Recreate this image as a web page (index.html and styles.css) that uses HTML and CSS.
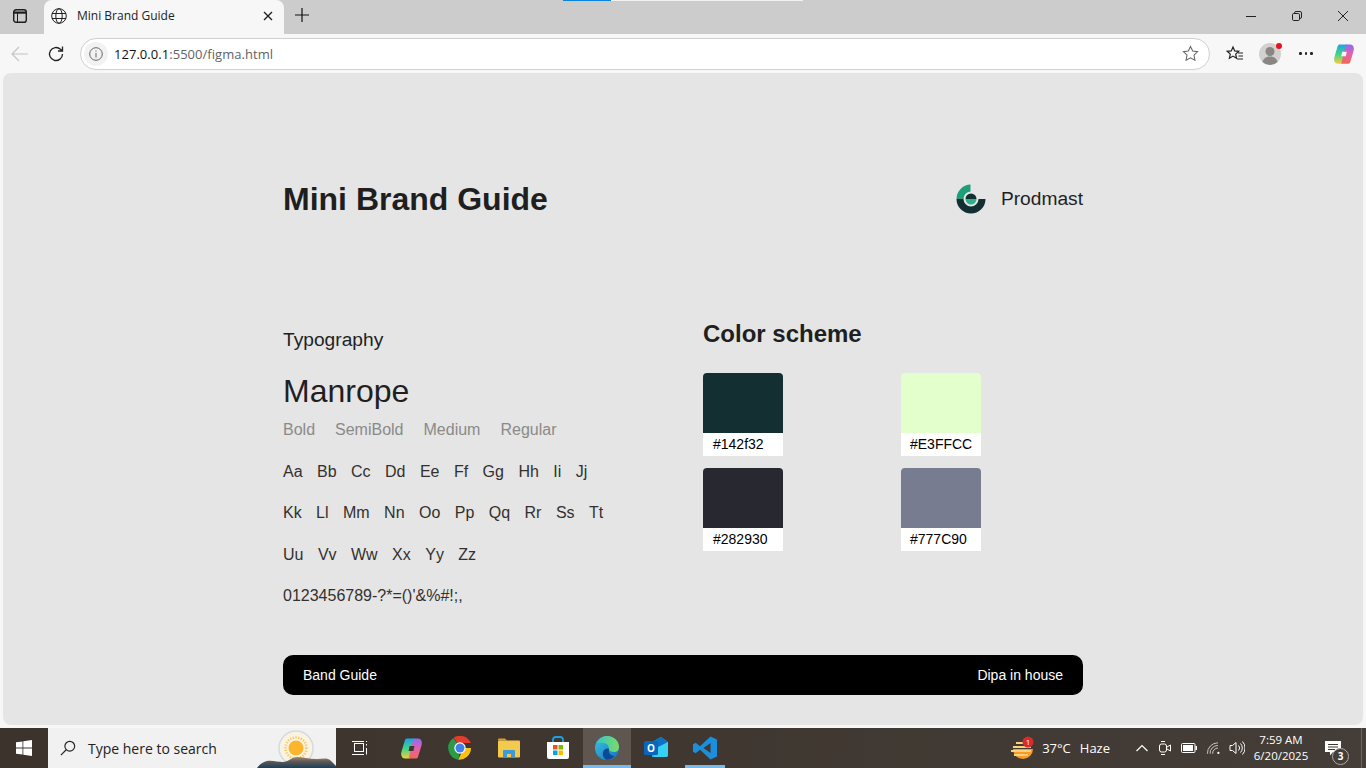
FILE: index.html
```html
<!DOCTYPE html>
<html lang="en">

<head>
    <meta charset="UTF-8">
    <meta name="viewport" content="width=device-width, initial-scale=1.0">
    <title>Mini Brand Guide</title>
    <link rel="stylesheet" href="styles.css">
</head>

<body>
    <div class="window">
        <!-- browser tabs -->
        <div class="tabbar">
            <span class="tab-side">
                <svg width="14" height="14" viewBox="0 0 14 14" fill="none" stroke="#1c1c1c" stroke-width="1.4"><rect x=".7" y=".7" width="12.6" height="12.6" rx="2.4"/><path d="M1 3.600h12" stroke-width="2.200"/><path d="M4.500 4v9.500" stroke-width="1"/></svg>
            </span>
            <div class="tab">
                <svg width="16" height="16" viewBox="0 0 16 16" fill="none" stroke="#222" stroke-width="1"><circle cx="8" cy="8" r="7.300"/><ellipse cx="8" cy="8" rx="3.200" ry="7.300"/><path d="M1 5.500h14M1 10.500h14"/></svg>
                <span class="tab-title">Mini Brand Guide</span>
                <svg class="tab-close" width="10" height="10" viewBox="0 0 10 10" stroke="#222" stroke-width="1.400"><path d="M1 1l8 8M9 1l-8 8"/></svg>
            </div>
            <svg class="tab-new" width="14" height="14" viewBox="0 0 14 14" stroke="#111" stroke-width="1.200"><path d="M7 0v14M0 7h14"/></svg>
            <div class="strip"><span class="strip-blue"></span><span class="strip-light"></span></div>
            <div class="win-btns">
                <svg width="10" height="10" viewBox="0 0 10 10" stroke="#222"><path d="M0 5.500h10"/></svg>
                <svg width="10" height="10" viewBox="0 0 10 10" fill="none" stroke="#222"><rect x=".5" y="2.500" width="7" height="7" rx="1.200"/><path d="M2.500 2.500v-.5a1.500 1.500 0 0 1 1.500-1.500h4a1.500 1.500 0 0 1 1.500 1.500v4a1.500 1.500 0 0 1-1.500 1.500h-.5"/></svg>
                <svg width="10" height="10" viewBox="0 0 10 10" stroke="#222"><path d="M0 0l10 10M10 0l-10 10"/></svg>
            </div>
        </div>

        <!-- address bar -->
        <div class="toolbar">
            <svg class="nav-back" width="18" height="16" viewBox="0 0 18 16" fill="none" stroke="#c4c4c4" stroke-width="1.200"><path d="M17 8H1M8 1L1 8l7 7"/></svg>
            <svg class="nav-reload" width="18" height="18" viewBox="0 0 18 18" fill="none" stroke="#222" stroke-width="1.300"><path d="M15.500 9a6.500 6.500 0 1 1-2-4.700L15.500 6M15.500 1.500V6H11"/></svg>
            <div class="address">
                <span class="info"><svg width="14" height="14" viewBox="0 0 14 14" fill="none" stroke="#666"><circle cx="7" cy="7" r="6.300"/><path d="M7 6v4.500M7 3.500v1.200"/></svg></span>
                <span class="url">127.0.0.1<span class="url-rest">:5500/figma.html</span></span>
                <svg class="addr-star" width="17" height="17" viewBox="0 0 18 18" fill="none" stroke="#666" stroke-width="1.100"><path d="M9 1.500l2.300 4.900 5.200.7-3.800 3.700 1 5.300L9 13.500l-4.700 2.600 1-5.300L1.500 7.100l5.200-.7z"/></svg>
            </div>
            <svg class="fav" width="18" height="18" viewBox="0 0 18 18" fill="none" stroke="#222" stroke-width="1.200"><path d="M7 2l1.700 3.900 4 .4-3 2.800.9 4.200L7 11.100l-3.600 2.200.9-4.200-3-2.800 4-.4zM12 8h5M12.500 11H17M11 14h6"/></svg>
            <span class="avatar">
                <svg width="22" height="22" viewBox="0 0 22 22"><circle cx="11" cy="11" r="11" fill="#d3d1cf"/><circle cx="11" cy="8.500" r="4.500" fill="#8a8683"/><path d="M3.500 19c1-4 4-5.500 7.500-5.500s6.500 1.500 7.500 5.500a11 11 0 0 1-15 0z" fill="#8a8683"/></svg>
                <i class="avatar-dot"></i>
            </span>
            <span class="dots"><i></i><i></i><i></i></span>
            <svg class="copilot" width="22" height="22" viewBox="0 0 24 24"><defs><linearGradient id="cpa" x1="0" y1="0" x2="0" y2="1"><stop offset="0" stop-color="#1fa2e8"/><stop offset=".5" stop-color="#3fd48a"/><stop offset="1" stop-color="#f5cf3a"/></linearGradient><linearGradient id="cpb" x1="0" y1="0" x2="0" y2="1"><stop offset="0" stop-color="#f26a4f"/><stop offset=".5" stop-color="#e45fb0"/><stop offset="1" stop-color="#8d6cf0"/></linearGradient></defs><path d="M7 1.500h8L10 22.500H5C2 22.500.5 19 1.500 15.500l3-10C5 3.500 5.500 1.500 7 1.500z" fill="url(#cpa)"/><path d="M7 1.500h8L10 22.500H5C2 22.500.5 19 1.500 15.500l3-10C5 3.500 5.500 1.500 7 1.500z" fill="url(#cpb)" transform="rotate(180 12 12)"/><path d="M10 9.500h5l-1 5H9z" fill="#f7f7f7"/></svg>
        </div>

        <!-- the page itself -->
        <main class="viewport">
            <div class="guide">
                <header class="guide-head">
                    <h1>Mini Brand Guide</h1>
                    <div class="brand">
                        <svg width="30" height="30" viewBox="0 0 30 30"><path d="M14.500 0.500A14.500 14.500 0 0 0 0.500 15H7.500A7.500 7.500 0 0 1 14.500 7.500z" fill="#1f9d78"/><path d="M0.500 15A14.500 14.500 0 0 0 29.500 15H22.500A7.500 7.500 0 0 1 7.500 15z" fill="#142f32"/><path d="M9.500 15a5.500 5.500 0 0 1 11 0z" fill="#142f32"/><path d="M9.500 15a5.500 5.500 0 0 0 11 0z" fill="#2fb08a"/></svg>
                        <span>Prodmast</span>
                    </div>
                </header>

                <div class="columns">
                    <section class="typo">
                        <h3>Typography</h3>
                        <p class="font-name">Manrope</p>
                        <div class="weights"><span>Bold</span><span>SemiBold</span><span>Medium</span><span>Regular</span></div>
                        <div class="letters"><span>Aa</span><span>Bb</span><span>Cc</span><span>Dd</span><span>Ee</span><span>Ff</span><span>Gg</span><span>Hh</span><span>Ii</span><span>Jj</span></div>
                        <div class="letters"><span>Kk</span><span>Ll</span><span>Mm</span><span>Nn</span><span>Oo</span><span>Pp</span><span>Qq</span><span>Rr</span><span>Ss</span><span>Tt</span></div>
                        <div class="letters"><span>Uu</span><span>Vv</span><span>Ww</span><span>Xx</span><span>Yy</span><span>Zz</span></div>
                        <div class="letters"><span>0123456789-?*=()'&amp;%#!;,</span></div>
                    </section>

                    <section class="colors">
                        <h2>Color scheme</h2>
                        <div class="swatches">
                            <div class="swatch"><div class="chip c-teal"></div><p class="code">#142f32</p></div>
                            <div class="swatch"><div class="chip c-lime"></div><p class="code">#E3FFCC</p></div>
                            <div class="swatch"><div class="chip c-dark"></div><p class="code">#282930</p></div>
                            <div class="swatch"><div class="chip c-gray"></div><p class="code">#777C90</p></div>
                        </div>
                    </section>
                </div>

                <footer class="guide-foot">
                    <span>Band Guide</span>
                    <span>Dipa in house</span>
                </footer>
            </div>
        </main>

        <!-- windows taskbar -->
        <div class="taskbar">
            <span class="start">
                <svg width="16" height="16" viewBox="0 0 16 16" fill="#fff"><path d="M0 2.300l6.500-.9v6.200H0zM7.300 1.300L16 0v7.600H7.300zM0 8.400h6.500v6.200L0 13.700zM7.300 8.400H16V16l-8.700-1.300z"/></svg>
            </span>
            <div class="search">
                <svg width="16" height="16" viewBox="0 0 18 18" fill="none" stroke="#222" stroke-width="1.300"><circle cx="11" cy="7" r="5.500"/><path d="M7 11l-6 6"/></svg>
                <span class="search-text">Type here to search</span>
                <svg class="search-art" width="80" height="39" viewBox="0 0 80 39"><defs><linearGradient id="hill" x1="0" y1="0" x2="0" y2="1"><stop offset="0" stop-color="#a98a6c"/><stop offset=".4" stop-color="#5d5a58"/><stop offset="1" stop-color="#1c3d57"/></linearGradient></defs><circle cx="40" cy="19" r="17" fill="#fbf3e2" stroke="#cfdce0" stroke-width="1.500"/><circle cx="40" cy="19" r="7.500" fill="#fbb62e"/><circle cx="40" cy="19" r="10.500" fill="none" stroke="#f7c65a" stroke-width="2.500" stroke-dasharray="1.200 1.500"/><path d="M1 39C4 35 7 33 11 32c5-1 11 1 16 1 5 0 9-5 14-5 6 0 12 2 20 2 4 0 8-1 11 0 3 1 5 4 8 7v2z" fill="url(#hill)"/></svg>
            </div>
            <div class="task-icons">
                <span class="task-icon">
                    <svg width="16" height="16" viewBox="0 0 16 16" fill="none" stroke="#fff"><rect x="2.500" y="3.500" width="9" height="8"/><path d="M0 1.500h12M0 14.500h12M14.500 1v1M14.500 4v1.500M14.500 8v6.500"/></svg>
                </span>
                <span class="task-icon">
                    <svg width="23" height="23" viewBox="0 0 24 24"><defs><linearGradient id="cqa" x1="0" y1="0" x2="0" y2="1"><stop offset="0" stop-color="#1fa2e8"/><stop offset=".5" stop-color="#3fd48a"/><stop offset="1" stop-color="#f5cf3a"/></linearGradient><linearGradient id="cqb" x1="0" y1="0" x2="0" y2="1"><stop offset="0" stop-color="#f26a4f"/><stop offset=".5" stop-color="#e45fb0"/><stop offset="1" stop-color="#8d6cf0"/></linearGradient></defs><path d="M7 1.500h8L10 22.500H5C2 22.500.5 19 1.500 15.500l3-10C5 3.500 5.500 1.500 7 1.500z" fill="url(#cqa)"/><path d="M7 1.500h8L10 22.500H5C2 22.500.5 19 1.500 15.500l3-10C5 3.500 5.500 1.500 7 1.500z" fill="url(#cqb)" transform="rotate(180 12 12)"/><path d="M10 9.500h5l-1 5H9z" fill="#3f3730"/></svg>
                </span>
                <span class="task-icon">
                    <svg width="24" height="24" viewBox="0 0 24 24"><path d="M12 12L5.800 1.500A12 12 0 0 1 23 7H12z" fill="#e33b2e"/><path d="M12 12H23A12 12 0 0 1 10 23.800L15 14z" fill="#fbc116"/><path d="M12 12l-1.500 11.800A12 12 0 0 1 5.500 2z" fill="#2c9a47"/><circle cx="12" cy="12" r="5.700" fill="#fff"/><circle cx="12" cy="12" r="4.500" fill="#3f80ec"/></svg>
                </span>
                <span class="task-icon">
                    <svg width="22" height="20" viewBox="0 0 22 20"><path d="M0 1.500A1 1 0 0 1 1 .5h6l2 2h-9z" fill="#d9a21f"/><rect y="2.500" width="22" height="17" rx="1" fill="#f3c94e"/><path d="M5 19.500v-6.500a1 1 0 0 1 1-1h10a1 1 0 0 1 1 1v6.500h-4v-3.500h-4v3.500z" fill="#3b9ad9"/></svg>
                </span>
                <span class="task-icon">
                    <svg width="24" height="24" viewBox="0 0 24 24"><path d="M7 6V4a3 3 0 0 1 3-3h4a3 3 0 0 1 3 3v2" fill="none" stroke="#1ba1e2" stroke-width="1.800"/><path d="M1 6h22v15a2 2 0 0 1-2 2H3a2 2 0 0 1-2-2z" fill="#fdfdfd"/><path d="M7 9h4.500v4.500H7z" fill="#f25022"/><path d="M12.500 9H17v4.500h-4.500z" fill="#7fba00"/><path d="M7 14.500h4.500V19H7z" fill="#00a4ef"/><path d="M12.500 14.500H17V19h-4.500z" fill="#ffb900"/></svg>
                </span>
                <span class="task-icon is-active">
                    <svg width="24" height="24" viewBox="0 0 24 24"><defs><linearGradient id="ega" x1="0" y1="0" x2="1" y2="1"><stop offset="0" stop-color="#36c5e0"/><stop offset="1" stop-color="#1a6fc4"/></linearGradient><linearGradient id="egb" x1="0" y1="0" x2="1" y2="0"><stop offset="0" stop-color="#38c4c8"/><stop offset="1" stop-color="#7bdc64"/></linearGradient></defs><circle cx="12" cy="12" r="12" fill="url(#ega)"/><path d="M2 7C4 2.500 8 0 12 0c7 0 12 5 12 11 0 3-2 5-5 5-3 0-5-1-5-3 0-4-3-6-6-6-2.500 0-5 .5-6 0z" fill="url(#egb)"/><path d="M14 13c-1 4 2 7 5.500 7-2 2.500-5 4-8 3.800C8 22 7 18 8.500 15c1-2 3.500-3 5.500-2z" fill="#0b4a96"/></svg>
                </span>
                <span class="task-icon">
                    <svg width="24" height="24" viewBox="0 0 24 24"><path d="M8 6l9-5 7 5v13a2 2 0 0 1-2 2H8z" fill="#1fb6e8"/><path d="M8 6l9-5 7 5-8 6z" fill="#0d72c4"/><path d="M10 13l14-7v13a2 2 0 0 1-2 2H10z" fill="#35d0f2"/><rect y="5" width="14" height="14" rx="1.500" fill="#0a66bd"/><text x="7" y="16" text-anchor="middle" class="outlook-o">O</text></svg>
                </span>
                <span class="task-icon is-open">
                    <svg width="24" height="24" viewBox="0 0 24 24"><path d="M17.500 0.500L24 3.500v17l-6.500 3L7 13.800l-4.300 3.400L0 15.700V8.300l2.700-1.500L7 10.200z" fill="#1b8fdc"/><path d="M17.500 7L10.500 12l7 5z" fill="#3f3730"/></svg>
                </span>
            </div>
            <div class="tray">
                <svg width="24" height="24" viewBox="0 0 24 24"><path d="M3 13h20a10 10 0 0 1-20 0z" fill="#f79a28"/><path d="M6 7h11M3 11h18M1 15h20M4 19h14" stroke="#fbd27a" stroke-width="2.200"/><circle cx="18" cy="6" r="5.500" fill="#d92b2b"/><text x="18" y="9" text-anchor="middle" class="badge-num">1</text></svg>
                <span class="temp">37°C</span>
                <span class="haze">Haze</span>
                <svg class="tray-chev" width="12" height="8" viewBox="0 0 12 8" fill="none" stroke="#fff" stroke-width="1.200"><path d="M.5 7L6 1.500 11.500 7"/></svg>
                <svg class="tray-cam" width="12" height="16" viewBox="0 0 12 16" fill="none" stroke="#fff"><rect x=".5" y="4" width="7" height="8" rx="2"/><path d="M8 7l3.500-2v6L8 9M2 1.500h4M2 14.500h4"/></svg>
                <svg class="tray-batt" width="16" height="10" viewBox="0 0 16 10"><rect x=".5" y=".5" width="13.500" height="9" rx="1" fill="none" stroke="#fff"/><rect x="2" y="2" width="10" height="6" fill="#fff"/><rect x="14.500" y="3" width="1.500" height="4" fill="#fff"/></svg>
                <svg class="tray-wifi" width="14" height="13" viewBox="0 0 16 14" fill="none" stroke="#fff"><path d="M.5 13a12 12 0 0 1 12-12.500M3.500 13a9 9 0 0 1 9-9.500M6.500 13a6 6 0 0 1 6-6.500" opacity=".8"/><circle cx="13" cy="12" r="1.300" fill="#fff" stroke="none"/></svg>
                <svg class="tray-vol" width="16" height="16" viewBox="0 0 16 16" fill="none" stroke="#fff"><path d="M1 5.500h2.500L7 2.500v11l-3.500-3H1zM9.500 5.500a3.500 3.500 0 0 1 0 5M11.500 3.500a6.500 6.500 0 0 1 0 9M13.500 1.500a9.500 9.500 0 0 1 0 13"/></svg>
                <div class="clock"><span>7:59 AM</span><span>6/20/2025</span></div>
                <span class="notify">
                    <svg width="16" height="15" viewBox="0 0 16 15"><path d="M0 0h16v11H8l-3 3.500V11H0z" fill="#fff"/><path d="M3 3.500h10M3 6h10M3 8.500h7" stroke="#3f3730"/></svg>
                    <i class="notify-num">3</i>
                </span>
                <span class="show-desktop"></span>
            </div>
        </div>
    </div>
</body>

</html>
```

FILE: styles.css
```css
* {
    box-sizing: border-box;
}

html,
body {
    margin: 0;
    height: 100%;
    overflow: hidden;
}

body {
    font-family: "Liberation Sans", Arial, sans-serif;
}

.window {
    width: 1366px;
    height: 768px;
    display: flex;
    flex-direction: column;
    background-color: #f7f7f7;
}

/* browser tabs */
.tabbar {
    position: relative;
    height: 34px;
    flex: none;
    display: flex;
    align-items: flex-end;
    background-color: #cccccc;
}

.tab-side {
    width: 44px;
    height: 34px;
    display: flex;
    align-items: center;
    justify-content: center;
    padding: 0 4px 3px 0;
}

.tab {
    width: 240px;
    height: 34px;
    display: flex;
    align-items: center;
    gap: 10px;
    padding: 0 11px 3px 7px;
    border-radius: 8px 8px 0 0;
    background-color: #f7f7f7;
}

.tab-title {
    flex: 1;
    font: 12px "Open Sans", sans-serif;
    color: #222;
}

.tab-new {
    margin: 0 0 12px 11px;
}

.strip {
    position: absolute;
    left: 563px;
    top: 0;
    display: flex;
    height: 1px;
}

.strip-blue {
    width: 48px;
    background-color: #0a84e0;
}

.strip-light {
    width: 192px;
    background-color: #f2f2f2;
}

.win-btns {
    margin-left: auto;
    height: 34px;
    display: flex;
    gap: 36px;
    align-items: center;
    padding: 0 18px 3px 0;
}

/* address bar */
.toolbar {
    height: 39px;
    flex: none;
    display: flex;
    align-items: center;
    padding: 0 10px 0 11px;
}

.nav-reload {
    margin-left: 18px;
}

.address {
    width: 1130px;
    height: 32px;
    margin-left: 15px;
    display: flex;
    align-items: center;
    padding: 0 10px 0 3px;
    border: 1px solid #d0d0d0;
    border-radius: 16px;
    background-color: #fff;
}

.info {
    width: 24px;
    height: 24px;
    display: flex;
    align-items: center;
    justify-content: center;
    border-radius: 50%;
    background-color: #f2f2f2;
}

.url {
    margin-left: 6px;
    font: 13px "Open Sans", sans-serif;
    letter-spacing: 0.04px;
    color: #111;
}

.url-rest {
    color: #5f6368;
}

.addr-star {
    margin-left: auto;
}

.fav {
    margin-left: 16px;
}

.avatar {
    position: relative;
    margin-left: 15px;
    height: 22px;
}

.avatar-dot {
    position: absolute;
    right: -1px;
    top: 0;
    width: 6px;
    height: 6px;
    border-radius: 50%;
    background-color: #e81123;
}

.dots {
    margin-left: 18px;
    display: flex;
    gap: 3px;
}

.dots i {
    width: 2.5px;
    height: 2.5px;
    border-radius: 50%;
    background-color: #222;
}

.copilot {
    margin-left: 20px;
}

/* page */
.viewport {
    width: 1360px;
    height: 652px;
    flex: none;
    margin: 0 3px;
    padding-top: 106px;
    border-radius: 8px;
    background-color: #e5e5e5;
}

.guide {
    width: 800px;
    margin-left: 280px;
    color: #1f1f1f;
}

.guide-head {
    display: flex;
    align-items: center;
    justify-content: space-between;
    height: 40px;
}

h1 {
    margin: 0;
    font-size: 32px;
    font-weight: 700;
}

.brand {
    display: flex;
    align-items: center;
    gap: 15px;
    font-size: 19.2px;
}

.columns {
    display: flex;
    margin-top: 96px;
    height: 338px;
}

.typo {
    width: 420px;
}

h3 {
    margin: 0;
    padding-top: 13px;
    font-size: 19.2px;
    font-weight: 400;
    line-height: 23px;
}

.font-name {
    margin: 22px 0 0;
    font-size: 32px;
    line-height: 37px;
}

.weights {
    display: flex;
    gap: 20px;
    margin-top: 11px;
    font-size: 16px;
    line-height: 18px;
    color: #8a8a8a;
}

.letters {
    display: flex;
    gap: 14.45px;
    margin-top: 23.5px;
    font-size: 16px;
    line-height: 18px;
    color: #33302e;
}

.colors {
    width: 380px;
}

h2 {
    margin: 0;
    padding-top: 5px;
    font-size: 24px;
    font-weight: 700;
    line-height: 28px;
}

.swatches {
    display: grid;
    grid-template-columns: 198px 80px;
    row-gap: 12px;
    margin-top: 25px;
}

.swatch {
    width: 80px;
}

.chip {
    height: 60px;
    border-radius: 4px 4px 0 0;
}

.c-teal {
    background-color: #142f32;
}

.c-lime {
    background-color: #e3ffcc;
}

.c-dark {
    background-color: #282930;
}

.c-gray {
    background-color: #777c90;
}

.code {
    margin: 0;
    height: 23px;
    padding-left: 10px;
    background-color: #fff;
    color: #000;
    font-size: 14px;
    line-height: 23px;
}

.swatch:nth-child(even) .code {
    padding-left: 9px;
}

.guide-foot {
    display: flex;
    justify-content: space-between;
    align-items: center;
    height: 40px;
    margin-top: 2px;
    padding: 0 20px;
    border-radius: 10px;
    background-color: #000;
    color: #fff;
    font-size: 14px;
}

/* taskbar */
.taskbar {
    height: 40px;
    flex: none;
    margin-top: 3px;
    display: flex;
    align-items: center;
    background: linear-gradient(90deg, #3c332c, #3f3730 50%, #443d38);
    color: #fff;
}

.start {
    width: 48px;
    display: flex;
    justify-content: center;
}

.search {
    position: relative;
    width: 288px;
    height: 40px;
    display: flex;
    align-items: center;
    gap: 12px;
    padding-left: 12px;
    background-color: #f1f1f1;
    overflow: hidden;
}

.search-text {
    font: 14px "Open Sans", sans-serif;
    color: #222;
}

.search-art {
    position: absolute;
    right: 0;
    top: 1px;
}

.task-icons {
    display: flex;
    gap: 1px;
}

.task-icon {
    position: relative;
    width: 48px;
    height: 40px;
    display: flex;
    align-items: center;
    justify-content: center;
}

.task-icon:first-child {
    margin-right: 2px;
}

.task-icon.is-active {
    background-color: #5f5650;
}

.task-icon.is-active::after,
.task-icon.is-open::after {
    content: "";
    position: absolute;
    left: 0;
    right: 0;
    bottom: 0;
    height: 3px;
    background-color: #76b9ed;
}

.task-icon.is-open::after {
    left: 4px;
    right: 4px;
}

.outlook-o {
    font: 700 10px "Open Sans", sans-serif;
    fill: #fff;
}

.tray {
    margin-left: auto;
    height: 40px;
    display: flex;
    align-items: center;
    padding-right: 4px;
    font: 13px "Open Sans", sans-serif;
}

.badge-num {
    font: 8px "Open Sans", sans-serif;
    fill: #fff;
}

.temp {
    margin-left: 8px;
}

.haze {
    margin-left: 9px;
}

.tray-chev {
    margin-left: 26px;
}

.tray-cam {
    margin-left: 11px;
}

.tray-batt {
    margin-left: 10px;
}

.tray-wifi {
    margin-left: 10px;
}

.tray-vol {
    margin-left: 8px;
}

.clock {
    width: 52px;
    margin-left: 10px;
    display: flex;
    flex-direction: column;
    align-items: center;
    font-size: 11.5px;
    line-height: 16px;
    white-space: nowrap;
}

.notify {
    position: relative;
    width: 36px;
    height: 40px;
    margin-left: 18px;
    display: flex;
    align-items: center;
}

.notify-num {
    position: absolute;
    left: 7px;
    top: 20px;
    width: 17px;
    height: 17px;
    border: 1px solid #aaa;
    border-radius: 50%;
    background-color: #443d38;
    font: 700 10px/15px "Open Sans", sans-serif;
    text-align: center;
}

.show-desktop {
    width: 1px;
    height: 40px;
    background-color: #6d6762;
}
```
